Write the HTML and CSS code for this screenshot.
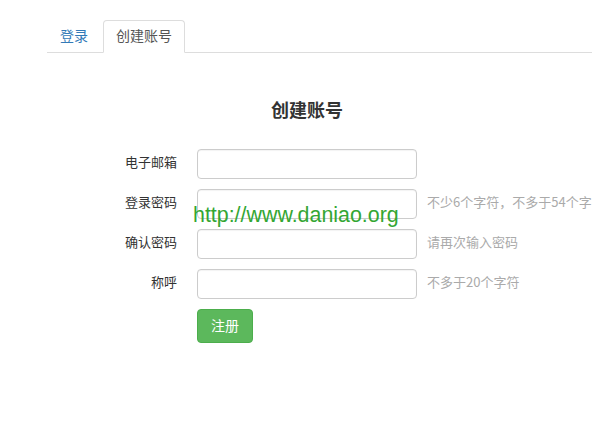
FILE: index.html
```html
<!DOCTYPE html>
<html lang="zh-CN">
<head>
<meta charset="utf-8">
<title>创建账号</title>
<link rel="stylesheet" href="styles.css">
</head>
<body>
<div class="page">
  <ul class="tabs">
    <li class="tab"><a class="tab-link" href="#">登录</a></li>
    <li class="tab"><a class="tab-link active" href="#">创建账号</a></li>
  </ul>
  <h2 class="title">创建账号</h2>
  <form class="form">
    <label class="label">电子邮箱</label>
    <input class="input" type="text">
    <span class="hint"></span>

    <label class="label">登录密码</label>
    <input class="input" type="password">
    <span class="hint">不少6个字符，不多于54个字符</span>

    <label class="label">确认密码</label>
    <input class="input" type="password">
    <span class="hint">请再次输入密码</span>

    <label class="label">称呼</label>
    <input class="input" type="text">
    <span class="hint">不多于20个字符</span>

    <span class="label"></span>
    <div class="actions"><button class="btn" type="button">注册</button></div>
  </form>
  <div class="watermark">http://www.daniao.org</div>
</div>
</body>
</html>
```
FILE: styles.css
```css
html, body {
  margin: 0;
  padding: 0;
  overflow: hidden;
  background: #fff;
}
body {
  font-family: "Noto Sans CJK SC", "Noto Sans", sans-serif;
  color: #333;
}
.page {
  position: relative;
  width: 520px;
  padding: 20px 0 0 47px;
  height: 415px;
}
.tabs {
  list-style: none;
  margin: 0;
  padding: 0;
  display: flex;
  border-bottom: 1px solid #ddd;
  width: 545px;
}
.tab {
  margin-bottom: -1px;
  margin-right: 2px;
}
.tab-link {
  display: block;
  padding: 4px 12px 7px;
  line-height: 20px;
  font-size: 14px;
  color: #337ab7;
  text-decoration: none;
  border: 1px solid transparent;
  border-radius: 4px 4px 0 0;
}
.tab-link.active {
  color: #555;
  background: #fff;
  border-color: #ddd #ddd transparent;
}
.title {
  margin: 43px 0 0;
  padding-bottom: 2px;
  text-align: center;
  font-size: 18px;
  line-height: 26px;
  font-weight: bold;
  color: #333;
}
.form {
  margin-top: 25px;
  display: grid;
  grid-template-columns: 130px 220px 1fr;
  column-gap: 20px;
  row-gap: 10px;
  align-items: center;
}
.label {
  text-align: right;
  font-size: 13px;
  line-height: 18px;
  padding-bottom: 4px;
  color: #333;
}
.input {
  box-sizing: border-box;
  width: 220px;
  height: 30px;
  margin: 0;
  border: 1px solid #ccc;
  border-radius: 4px;
  box-shadow: inset 0 1px 1px rgba(0,0,0,0.05);
}
.hint {
  margin-left: -10px;
  font-size: 13px;
  line-height: 18px;
  padding-bottom: 4px;
  color: #aaa;
  white-space: nowrap;
}
.actions {
  grid-column: 2 / 4;
}
.btn {
  font-family: inherit;
  font-size: 14px;
  line-height: 20px;
  padding: 5px 13px 7px;
  color: #fff;
  background: #5cb85c;
  border: 1px solid #4cae4c;
  border-radius: 4px;
}
.watermark {
  position: absolute;
  left: 193px;
  top: 203px;
  font-family: "Liberation Sans", Arial, sans-serif;
  font-size: 21.4px;
  color: #33a633;
  white-space: nowrap;
}
```
